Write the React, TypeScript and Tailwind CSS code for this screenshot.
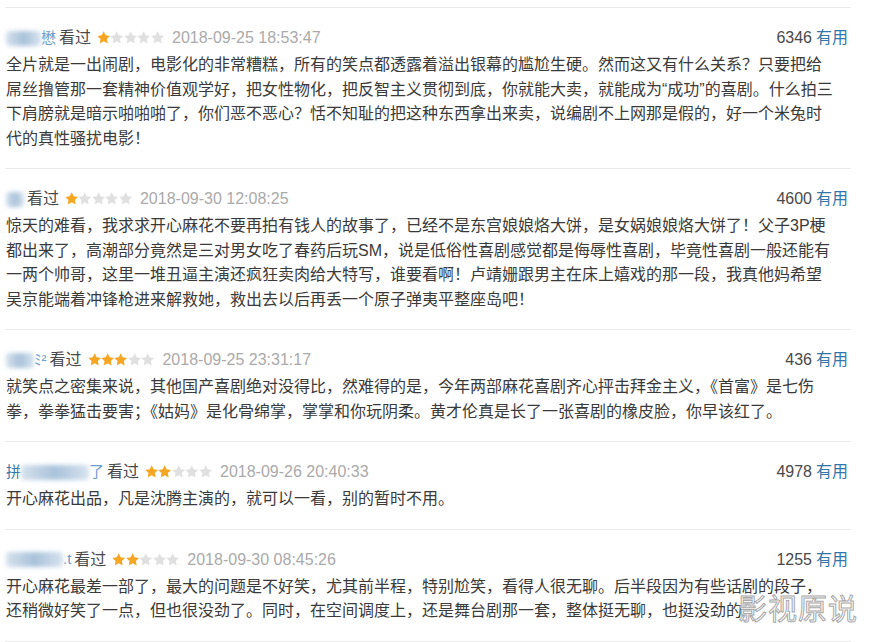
const FONT = "font-['Liberation_Sans','Noto_Sans_CJK_SC',sans-serif]";

type Review = {
  name: { blur: number; pre?: string; post?: string };
  rating: number;
  time: string;
  votes: string;
  lines: string[];
};

const reviews: Review[] = [
  {
    name: { blur: 35, post: "懋" },
    rating: 1,
    time: "2018-09-25 18:53:47",
    votes: "6346",
    lines: [
      "全片就是一出闹剧，电影化的非常糟糕，所有的笑点都透露着溢出银幕的尴尬生硬。然而这又有什么关系？只要把给",
      "屌丝撸管那一套精神价值观学好，把女性物化，把反智主义贯彻到底，你就能大卖，就能成为“成功”的喜剧。什么拍三",
      "下肩膀就是暗示啪啪啪了，你们恶不恶心？恬不知耻的把这种东西拿出来卖，说编剧不上网那是假的，好一个米兔时",
      "代的真性骚扰电影！",
    ],
  },
  {
    name: { blur: 18 },
    rating: 1,
    time: "2018-09-30 12:08:25",
    votes: "4600",
    lines: [
      "惊天的难看，我求求开心麻花不要再拍有钱人的故事了，已经不是东宫娘娘烙大饼，是女娲娘娘烙大饼了！父子3P梗",
      "都出来了，高潮部分竟然是三对男女吃了春药后玩SM，说是低俗性喜剧感觉都是侮辱性喜剧，毕竟性喜剧一般还能有",
      "一两个帅哥，这里一堆丑逼主演还疯狂卖肉给大特写，谁要看啊！卢靖姗跟男主在床上嬉戏的那一段，我真他妈希望",
      "吴京能端着冲锋枪进来解救她，救出去以后再丢一个原子弹夷平整座岛吧！",
    ],
  },
  {
    name: { blur: 28, post: "ﾐ²" },
    rating: 3,
    time: "2018-09-25 23:31:17",
    votes: "436",
    lines: [
      "就笑点之密集来说，其他国产喜剧绝对没得比，然难得的是，今年两部麻花喜剧齐心抨击拜金主义，《首富》是七伤",
      "拳，拳拳猛击要害；《姑妈》是化骨绵掌，掌掌和你玩阴柔。黄才伦真是长了一张喜剧的橡皮脸，你早该红了。",
    ],
  },
  {
    name: { blur: 68, pre: "拼", post: "了" },
    rating: 2,
    time: "2018-09-26 20:40:33",
    votes: "4978",
    lines: ["开心麻花出品，凡是沈腾主演的，就可以一看，别的暂时不用。"],
  },
  {
    name: { blur: 57, post: " .t" },
    rating: 2,
    time: "2018-09-30 08:45:26",
    votes: "1255",
    lines: [
      "开心麻花最差一部了，最大的问题是不好笑，尤其前半程，特别尬笑，看得人很无聊。后半段因为有些话剧的段子，",
      "还稍微好笑了一点，但也很没劲了。同时，在空间调度上，还是舞台剧那一套，整体挺无聊，也挺没劲的",
    ],
  },
];

function Star({ on }: { on: boolean }) {
  return (
    <svg viewBox="1 1 22 22" width={13.4} height={13.4} className="shrink-0">
      <path
        d="M12 1.5L15.2 8.05 22.46 9.1 17.23 14.2 18.47 21.4 12 18 5.53 21.4 6.77 14.2 1.54 9.1 8.77 8.05Z"
        fill={on ? "#f6a623" : "#e0e0e0"}
      />
    </svg>
  );
}

function Name({ blur, pre, post }: Review["name"]) {
  return (
    <span className="flex items-center text-[15px] text-[#37a]">
      {pre && <span>{pre}</span>}
      <span
        className="h-[15px] shrink-0 rounded-sm bg-gradient-to-r from-[#d6e2ee] via-[#a9c2da] to-[#d7e3ef] blur-[2px]"
        style={{ width: blur }}
      />
      {post && <span className="text-[#6f9ccc]">{post}</span>}
    </span>
  );
}

export default function App() {
  return (
    <div className={`relative h-[642px] w-[874px] overflow-hidden bg-white ${FONT}`}>
      <div className="ml-[5px] w-[846px]">
        <div className="h-[8px] border-b border-[#eaeaea]" />
        {reviews.map((r, i) => (
          <div key={i} className="border-b border-[#eaeaea] pt-[21px] pb-[17px] pl-[1px] pr-[3px]">
            <div className="flex h-[18px] items-center justify-between text-[16px]">
              <div className="flex items-center">
                <Name {...r.name} />
                <span className="ml-[3px] text-[#494949]">看过</span>
                <span className="ml-[6px] flex items-center">
                  {[0, 1, 2, 3, 4].map((s) => (
                    <Star key={s} on={s < r.rating} />
                  ))}
                </span>
                <span className="ml-[8px] text-[#aaa]">{r.time}</span>
              </div>
              <div className="flex items-center gap-[4px]">
                <span className="text-[#494949]">{r.votes}</span>
                <span className="text-[#37a]">有用</span>
              </div>
            </div>
            <div className="mt-[6px] text-[16px] leading-[24.5px] text-[#3a3a3a]">
              {r.lines.map((l, j) => (
                <div key={j} className="whitespace-nowrap">
                  {l}
                </div>
              ))}
            </div>
          </div>
        ))}
      </div>
      <div className="absolute top-[590px] left-[738px] text-[29px] leading-[34px] tracking-[1px] text-white [-webkit-text-stroke:1px_#a8a8a8] font-['Noto_Sans_CJK_SC',sans-serif]">
        影视原说
      </div>
    </div>
  );
}
